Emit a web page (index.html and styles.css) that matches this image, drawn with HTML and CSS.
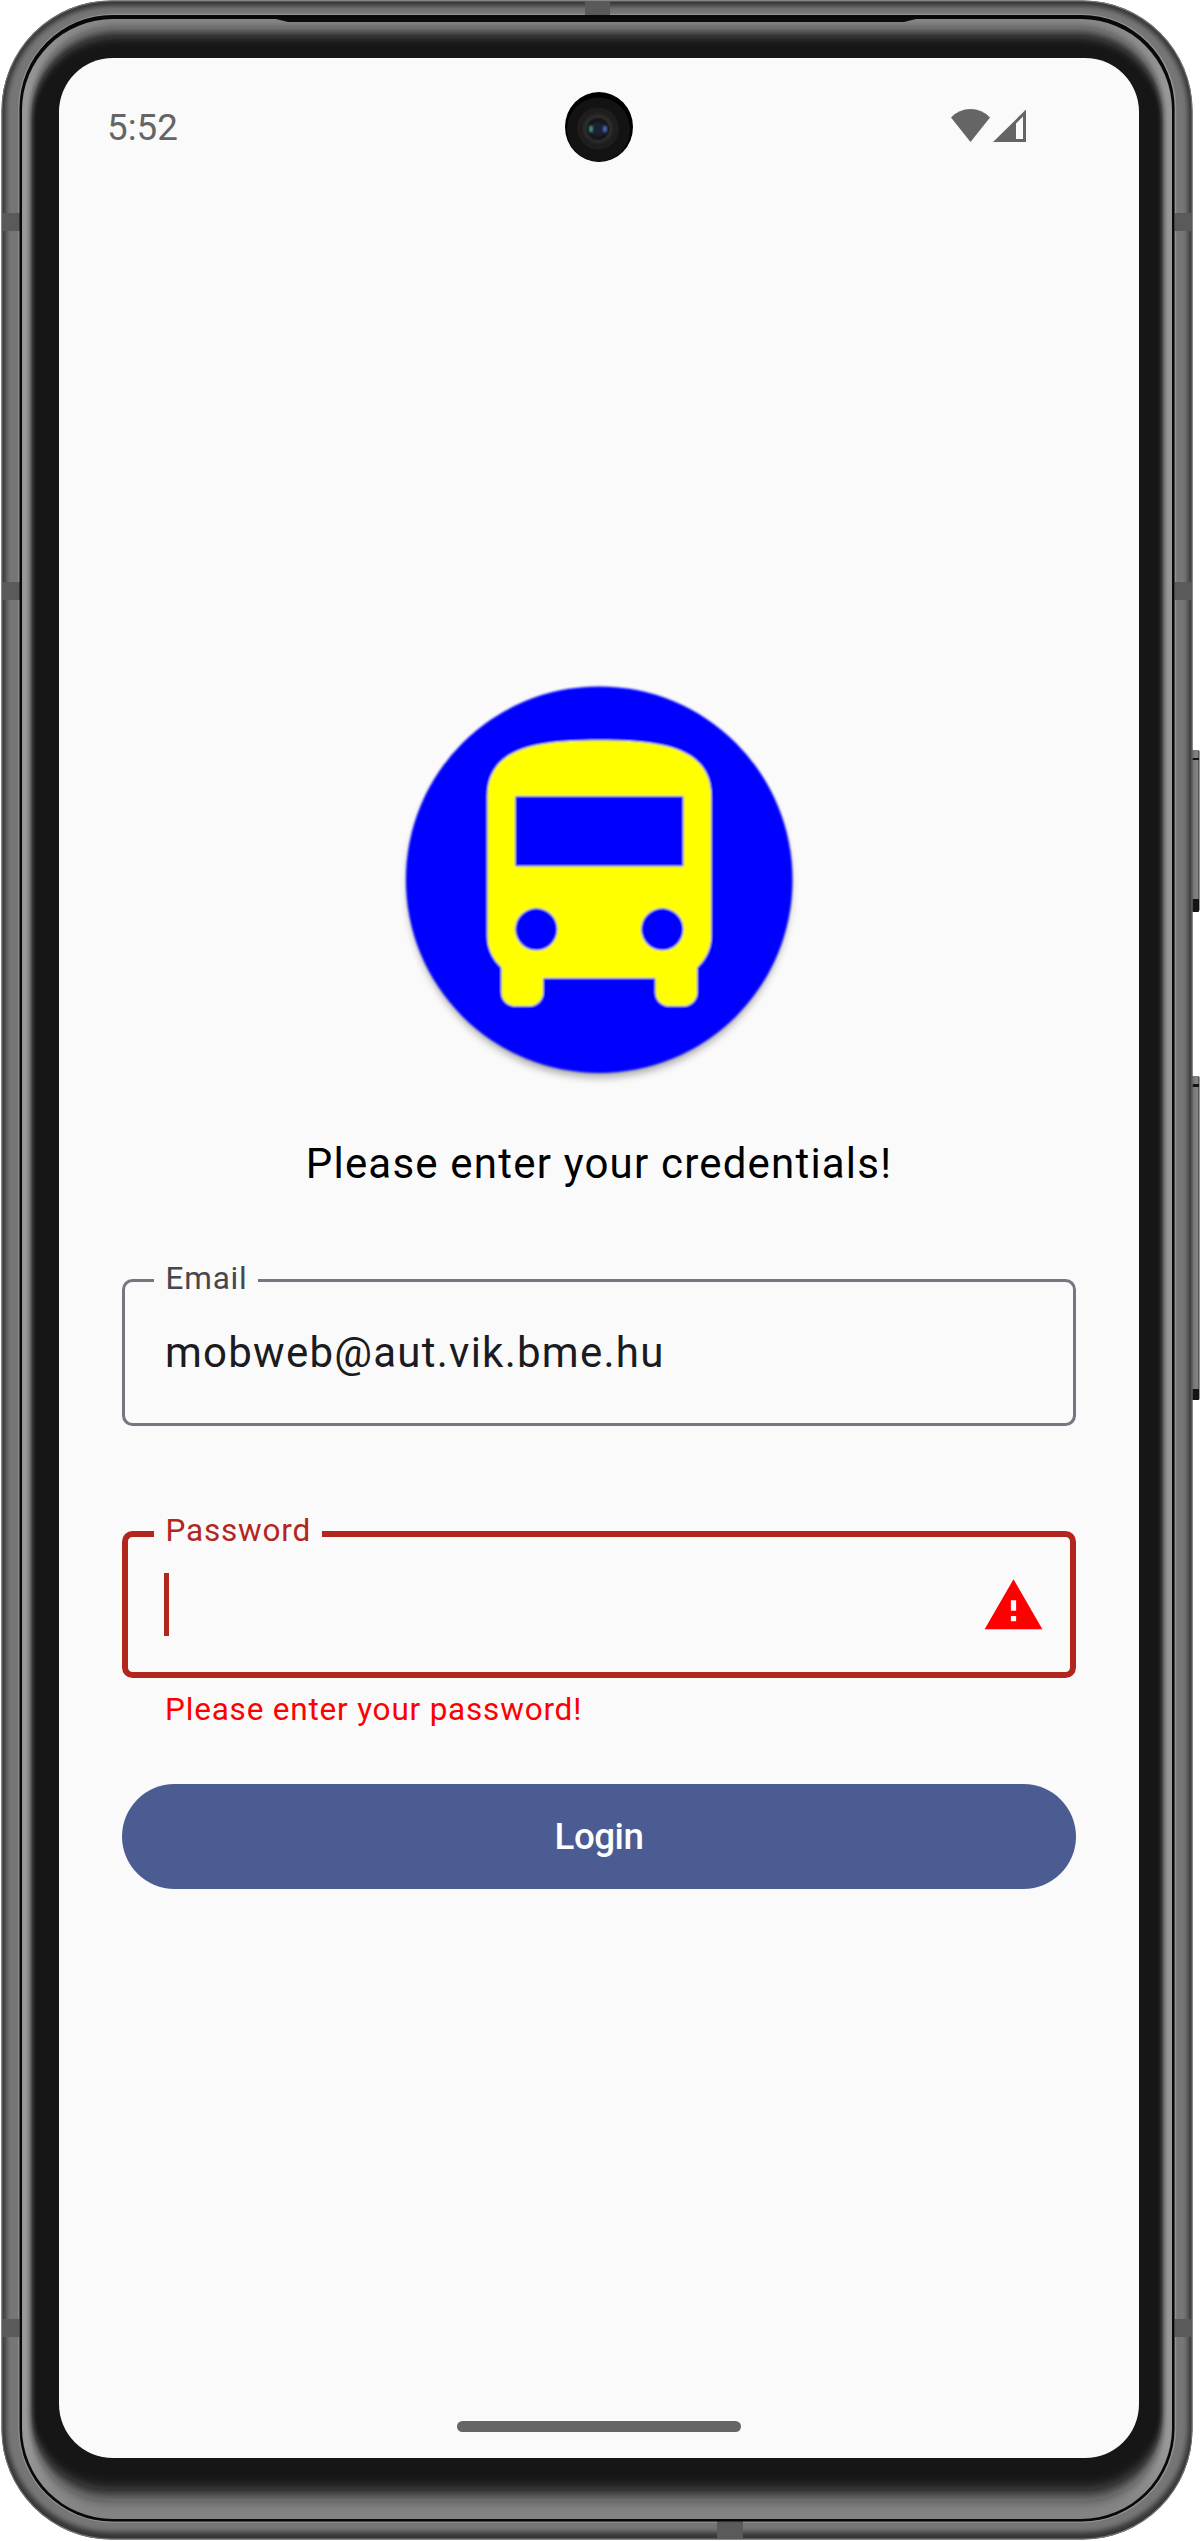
FILE: index.html
```html
<!DOCTYPE html>
<html lang="en">
<head>
<meta charset="utf-8">
<title>Login</title>
<link rel="stylesheet" href="styles.css">
</head>
<body>
<div class="device">
  <svg class="frame" width="1200" height="2541" viewBox="0 0 1200 2541" aria-hidden="true">
    <defs>
      <linearGradient id="key" x1="0" x2="1" y1="0" y2="0">
        <stop offset="0" stop-color="#444"/><stop offset=".3" stop-color="#777"/><stop offset=".75" stop-color="#858585"/><stop offset="1" stop-color="#333"/>
      </linearGradient>
      <linearGradient id="rim" x1="0" x2="0" y1="0" y2="1">
        <stop offset="0" stop-color="#8a8a8a"/><stop offset=".03" stop-color="#989898"/><stop offset=".97" stop-color="#989898"/><stop offset="1" stop-color="#828282"/>
      </linearGradient>
      <filter id="metalBlur" x="-5%" y="-5%" width="110%" height="110%"><feGaussianBlur stdDeviation="2.4"/></filter>
      <filter id="glassBlurTop" x="-5%" y="-5%" width="110%" height="110%"><feGaussianBlur stdDeviation="2.5 7"/></filter>
      <filter id="glassBlurBottom" x="-5%" y="-5%" width="110%" height="110%"><feGaussianBlur stdDeviation="2.5 9"/></filter>
      <clipPath id="body"><rect x="1.5" y=".5" width="1191" height="2539" rx="110"/></clipPath>
      <clipPath id="glass"><rect x="22" y="19" width="1150" height="2500" rx="91"/></clipPath>
      <clipPath id="upper"><rect width="1200" height="1270"/></clipPath>
      <clipPath id="lower"><rect y="1270" width="1200" height="1271"/></clipPath>
    </defs>
    <g fill="url(#key)">
      <rect x="1191" y="750" width="8.5" height="161" rx="1.5"/>
      <rect x="1191" y="1076" width="8.5" height="324" rx="1.5"/>
    </g>
    <g fill="#151515">
      <rect x="1192" y="758" width="7" height="2"/><rect x="1192" y="899" width="7" height="13" rx="1"/>
      <rect x="1192" y="1084" width="7" height="3"/><rect x="1192" y="1389" width="7" height="11" rx="1"/>
    </g>
    <g clip-path="url(#body)">
      <rect width="1200" height="2541" fill="#363636"/>
      <rect x="6" y="6" width="1182" height="2526" rx="105" fill="#767676" filter="url(#metalBlur)"/>
      <rect x="1.5" y=".5" width="1191" height="2539" rx="110" fill="none" stroke="#777" stroke-width="2"/>
      <rect x="19" y="14.5" width="1156.5" height="2507.5" rx="94" fill="none" stroke="#929292" stroke-width="1.5"/>
      <g fill="#5a5a5a">
        <rect x="2" y="213" width="18" height="18"/><rect x="1175" y="213" width="17" height="18"/>
        <rect x="2" y="582" width="18" height="18"/><rect x="1175" y="582" width="17" height="18"/>
        <rect x="2" y="2319" width="17" height="18"/><rect x="1175" y="2319" width="17" height="18"/>
        <rect x="585" y="1" width="25" height="15"/><rect x="717" y="2521" width="26" height="18"/>
      </g>
    </g>
    <rect x="19.5" y="15" width="1155" height="2506.5" rx="93" fill="#080808"/>
    <g clip-path="url(#glass)">
      <rect x="20" y="17" width="1155" height="2505" fill="url(#rim)"/>
      <g clip-path="url(#upper)"><rect x="31" y="32" width="1132" height="2460" rx="85" fill="#151515" filter="url(#glassBlurTop)"/></g>
      <g clip-path="url(#lower)"><rect x="31" y="32" width="1132" height="2463" rx="78" fill="#151515" filter="url(#glassBlurBottom)"/></g>
    </g>
    <path d="M272 18h648l-16 4H288z" fill="#0c0c0c"/>
  </svg>

  <main class="screen">
    <header class="status">
      <span class="clock">5:52</span>
      <svg class="camera" width="68" height="70" viewBox="0 0 68 70" aria-hidden="true">
        <defs><filter id="soft"><feGaussianBlur stdDeviation="1"/></filter></defs>
        <ellipse cx="34" cy="35" rx="34" ry="35" fill="#000"/>
        <ellipse cx="33.5" cy="37.5" rx="31.5" ry="32" fill="#131313"/>
        <circle cx="33" cy="36.5" r="21" fill="#1e1e1e"/>
        <circle cx="33" cy="36.5" r="15" fill="#292929" filter="url(#soft)"/>
        <circle cx="33" cy="37" r="11" fill="#17171b"/>
        <circle cx="33" cy="37" r="7" fill="#1c2430" filter="url(#soft)"/>
        <ellipse cx="26" cy="37" rx="2" ry="3.6" fill="#48938b" filter="url(#soft)"/>
        <ellipse cx="40" cy="37" rx="2.2" ry="3.6" fill="#4b65b4" filter="url(#soft)"/>
      </svg>
      <div class="signals">
        <svg width="39" height="33" viewBox="0 0 39 33" aria-hidden="true"><path d="M0 8.5Q8 0 19.5 0T39 8.5L19.5 33z" fill="#656565"/></svg>
        <svg width="33" height="33" viewBox="0 0 33 33" aria-hidden="true"><path fill-rule="evenodd" d="M0 33 33 .5V33zM23 14.500V30h7V7.500z" fill="#656565"/></svg>
      </div>
    </header>

    <form class="login">
      <svg class="logo" width="420" height="420" viewBox="0 0 420 420" role="img" aria-label="Bus">
        <defs>
          <filter id="drop" x="-10%" y="-10%" width="120%" height="120%"><feGaussianBlur stdDeviation="4"/></filter>
          <filter id="edge"><feGaussianBlur stdDeviation="1.1"/></filter>
        </defs>
        <circle cx="210.200" cy="216" r="191" fill="#000" opacity=".36" filter="url(#drop)"/>
        <g filter="url(#edge)">
          <circle cx="210.200" cy="209.700" r="193.300" fill="#00f"/>
          <path transform="translate(42.300 42.300) scale(14)" fill="#ff0" fill-rule="evenodd" d="M4 16c0 .88.39 1.670 1 2.220V20c0 .55.45 1 1 1h1c.55 0 1-.45 1-1v-1h8v1c0 .55.45 1 1 1h1c.55 0 1-.45 1-1v-1.780c.61-.55 1-1.340 1-2.220V6c0-3.500-3.580-4-8-4s-8 .5-8 4zM7.500 17a1.500 1.500 0 1 1 0-3 1.500 1.500 0 0 1 0 3zM16.500 17a1.500 1.500 0 1 1 0-3 1.500 1.500 0 0 1 0 3zM18 11H6V6h12z"/>
        </g>
      </svg>
      <p class="prompt">Please enter your credentials!</p>

      <div class="field">
        <span class="label">Email</span>
        <span class="value">mobweb@aut.vik.bme.hu</span>
      </div>

      <div class="field field-error">
        <span class="label">Password</span>
        <span class="caret"></span>
        <svg class="warning" width="63" height="63" viewBox="0 0 24 24" aria-hidden="true"><path fill="red" d="M1 21h22L12 2zm12-3h-2v-2h2zm0-4h-2v-4h2z"/></svg>
      </div>
      <p class="message">Please enter your password!</p>

      <button class="submit" type="button">Login</button>
    </form>

    <div class="home-bar"></div>
  </main>
</div>
</body>
</html>
```
FILE: styles.css
```css
* {
  box-sizing: border-box;
}

body {
  margin: 0;
  background: #fff;
  font-family: Roboto, sans-serif;
}

.device {
  display: grid;
  width: 1200px;
  height: 2541px;
}

.frame,
.screen {
  grid-area: 1 / 1;
}

.frame {
  display: block;
}

.screen {
  display: flex;
  flex-direction: column;
  align-items: center;
  width: 1080px;
  height: 2400px;
  margin: 58px 0 0 59px;
  border-radius: 54px;
  background: #fafafa;
}

.status {
  display: grid;
  grid-template-columns: 458px 68px 1fr;
  align-items: center;
  width: 100%;
  height: 70px;
  margin-top: 34px;
  padding: 0 113px 0 48px;
}

.clock {
  padding-top: 2px;
  color: #656565;
  font-size: 36.75px;
  line-height: 44px;
}

.signals {
  display: flex;
  justify-content: flex-end;
  gap: 3px;
  margin-top: -3px;
}

.login {
  display: flex;
  flex-direction: column;
  align-items: center;
  width: 954px;
  margin-top: 508px;
}

.logo {
  display: block;
}

.prompt {
  margin: 42px 0 84px;
  color: #000;
  font-size: 42px;
  letter-spacing: 1.2px;
  line-height: 63px;
}

.field {
  position: relative;
  display: flex;
  align-items: center;
  width: 100%;
  height: 147px;
  padding: 0 28px 0 40px;
  border: 3px solid #767680;
  border-radius: 10.5px;
}

.label {
  position: absolute;
  top: -24px;
  left: 29px;
  padding: 0 10.5px 0 11.5px;
  background: #fafafa;
  color: #46464f;
  font-size: 31.5px;
  letter-spacing: 0.8px;
  line-height: 42px;
}

.value {
  color: #1b1b21;
  font-size: 42px;
  letter-spacing: 1.25px;
  line-height: 63px;
}

.field-error {
  justify-content: space-between;
  margin-top: 105px;
  padding: 0 25px 0 36px;
  border: 6px solid #b3261e;
}

.field-error .label {
  top: -27px;
  left: 26px;
  color: #b3261e;
}

.caret {
  width: 5px;
  height: 63px;
  background: #b3261e;
}

.warning {
  margin-top: 2px;
}

.message {
  align-self: stretch;
  margin: 11px 43px 53px;
  color: #f00;
  font-size: 31.5px;
  letter-spacing: 0.8px;
  line-height: 42px;
}

.submit {
  width: 100%;
  height: 105px;
  padding: 0;
  border: 0;
  border-radius: 53px;
  background: #4a5c92;
  color: #fff;
  font: 500 36.75px/52px Roboto, sans-serif;
  letter-spacing: -0.5px;
}

.home-bar {
  width: 284px;
  height: 11px;
  margin: auto 0 26px;
  border-radius: 6px;
  background: #656565;
}
```
